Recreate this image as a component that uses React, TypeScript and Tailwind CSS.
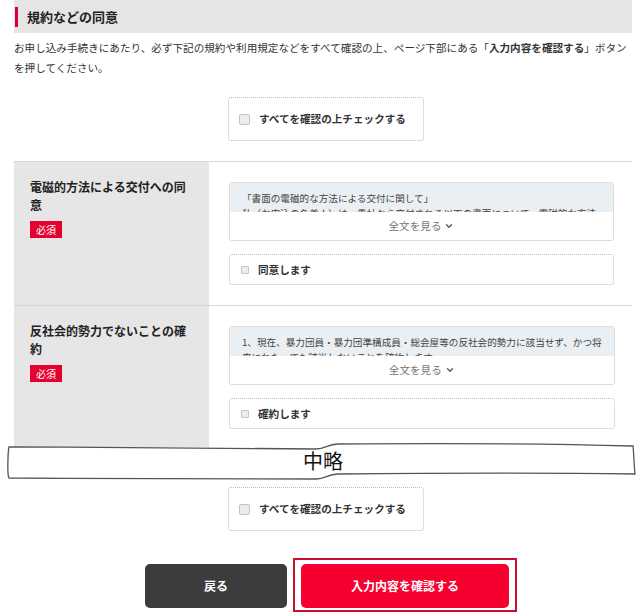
import { ChevronDown } from 'lucide-react'

const font = { fontFamily: '"Noto Sans CJK JP", "Noto Sans", sans-serif' }

function Check({ big }: { big?: boolean }) {
  return (
    <span
      className={
        big
          ? 'w-[11px] h-[11px] rounded-[2px] border border-[#c4c4c4] bg-[#ececec] shrink-0'
          : 'w-[8px] h-[8px] rounded-[1px] border border-[#c4c4c4] bg-[#ececec] shrink-0'
      }
    />
  )
}

function AllCheck() {
  return (
    <div className="ml-[214px] w-[196px] h-[44px] border border-dotted border-[#bdbdbd] rounded-[3px] flex items-center pl-[10px] gap-[9px]">
      <Check big />
      <span className="text-[10.6px] font-bold text-[#333]">すべてを確認の上チェックする</span>
    </div>
  )
}

type Row = {
  label: string[]
  lines: string[]
  agree: string
}

const rows: Row[] = [
  {
    label: ['電磁的方法による交付への同', '意'],
    lines: [
      '「書面の電磁的な方法による交付に関して」',
      '私（お申込の名義人）は、貴社から交付される以下の書面について、電磁的な方法',
    ],
    agree: '同意します',
  },
  {
    label: ['反社会的勢力でないことの確', '約'],
    lines: [
      '1、現在、暴力団員・暴力団準構成員・総会屋等の反社会的勢力に該当せず、かつ将',
      '来にわたっても該当しないことを確約します。',
    ],
    agree: '確約します',
  },
]

function TermsRow({ row, last }: { row: Row; last?: boolean }) {
  return (
    <div className={last ? 'grid grid-cols-[195px_1fr]' : 'grid grid-cols-[195px_1fr] border-b border-[#d6d6d6]'}>
      <div className="bg-[#e6e6e6] pl-[16px] pr-[12px] pt-[16px]">
        <div className="text-[12px] leading-[18px] font-bold text-[#222]">
          {row.label.map((l) => (
            <div key={l}>{l}</div>
          ))}
        </div>
        <div className="mt-[7px] w-[32px] h-[17px] bg-[#e6002d] text-white text-[10px] flex items-center justify-center">
          必須
        </div>
      </div>
      <div className={last ? 'pl-[20px] pr-[18px] pt-[20px] pb-[18px]' : 'pl-[20px] pr-[18px] pt-[20px] pb-[20px]'}>
        <div className="h-[59px] border border-[#dcdcdc] rounded-[3px] overflow-hidden flex flex-col">
          <div className="h-[29px] bg-[#e9eff3] overflow-hidden pt-[8px] px-[12px] text-[9.6px] leading-[15px] text-[#444] whitespace-nowrap">
            {row.lines.map((l) => (
              <div key={l}>{l}</div>
            ))}
          </div>
          <div className="flex-1 bg-white flex items-center justify-center gap-[3px] text-[10.6px] text-[#777]">
            全文を見る
            <ChevronDown size={10} strokeWidth={3} className="text-[#555]" />
          </div>
        </div>
        <div className="mt-[13px] h-[31px] border border-dotted border-[#bdbdbd] rounded-[3px] flex items-center pl-[11px] gap-[9px]">
          <Check />
          <span className="text-[10.6px] font-bold text-[#333]">{row.agree}</span>
        </div>
      </div>
    </div>
  )
}

function Omitted() {
  return (
    <div className="relative z-10 -mt-[6px] h-[40px] flex items-center justify-center">
      <svg className="absolute left-[-14px] top-0 w-[640px] h-[40px]" viewBox="0 0 640 40" fill="none">
        <path
          d="M9,6 C120,6 240,7 316,8 C326,8 327,3 338,3 C450,2 560,3 633,5 C634,15 634,25 635,33 C560,32 450,32 338,33 C327,33 326,38 316,38 C240,38 120,38 9,37 C7,34 8,10 9,6 Z"
          fill="white"
          stroke="#555"
          strokeWidth="1.3"
        />
      </svg>
      <span className="relative text-[20px] leading-[40px] font-normal text-[#111]">中略</span>
    </div>
  )
}

export default function App() {
  return (
    <div className="w-[640px] h-[616px] bg-white overflow-hidden" style={font}>
      <div className="ml-[14px] w-[618px]">
        <div className="h-[33px] bg-[#e5e5e5] flex items-center pl-[1px]">
          <span className="w-[3px] h-[20px] bg-[#d7003a]" />
          <span className="ml-[9px] text-[13px] font-bold text-[#222]">規約などの同意</span>
        </div>
        <p className="mt-[5px] text-[10.6px] leading-[20px] text-[#333]">
          お申し込み手続きにあたり、必ず下記の規約や利用規定などをすべて確認の上、ページ下部にある「
          <b>入力内容を確認する</b>」ボタンを押してください。
        </p>
        <div className="mt-[19px]">
          <AllCheck />
        </div>
        <div className="mt-[20px] border-t border-[#d6d6d6]">
          <TermsRow row={rows[0]} />
          <TermsRow row={rows[1]} last />
        </div>
        <Omitted />
        <div className="mt-[6px]">
          <AllCheck />
        </div>
        <div className="mt-[27px] flex items-start">
          <button className="ml-[131px] mt-[6px] w-[142px] h-[44px] rounded-[5px] bg-[#3c3c3c] text-white text-[12px] font-bold">
            戻る
          </button>
          <div className="ml-[6px] border-2 border-[#c8102e] pt-[4px] pb-[2px] px-[6px]">
            <button className="w-[208px] h-[44px] rounded-[5px] bg-[#f5002f] text-white text-[12px] font-bold">
              入力内容を確認する
            </button>
          </div>
        </div>
      </div>
    </div>
  )
}
